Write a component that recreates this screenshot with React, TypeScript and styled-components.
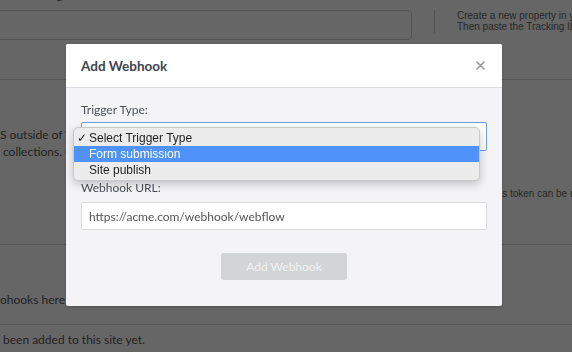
import styled, { createGlobalStyle } from 'styled-components'

const GlobalStyle = createGlobalStyle`
  html, body {
    margin: 0;
    padding: 0;
    width: 572px;
    height: 352px;
    overflow: hidden;
    background: #ffffff;
    font-family: Lato, 'Open Sans', sans-serif;
  }
`

const triggerOptions = ['Select Trigger Type', 'Form submission', 'Site publish']

function App() {
  return (
    <>
      <GlobalStyle />
      <Page>
        <Section $height={90}>
          <MainColumn>
            <FieldLabel>ate Tracking ID:</FieldLabel>
            <GhostInput />
          </MainColumn>
          <SideColumn $rule>
            <HelpText>Create a new property in your Google Analytics account.</HelpText>
            <HelpText>Then paste the Tracking ID here.</HelpText>
          </SideColumn>
        </Section>

        <Section $height={165}>
          <MainColumn $padTop={46}>
            <BodyLine>S outside of Webflow. Sync your items and manage</BodyLine>
            <BodyLine $indent={3}>collections. Create and update items with the API.</BodyLine>
          </MainColumn>
          <SideColumn $padTop={108}>
            <HelpText>The access token can be revoked.</HelpText>
          </SideColumn>
        </Section>

        <Section $height={80}>
          <MainColumn $padTop={46}>
            <BodyLine>ohooks here or with the API.</BodyLine>
          </MainColumn>
        </Section>

        <Section $height={40} $last>
          <MainColumn $padTop={6}>
            <BodyLine $indent={3}>been added to this site yet.</BodyLine>
          </MainColumn>
        </Section>
      </Page>

      <Overlay />

      <Modal>
        <ModalHeader>
          <ModalTitle>Add Webhook</ModalTitle>
          <CloseButton aria-label="close">
            <svg width="9" height="9" viewBox="0 0 9 9">
              <path d="M1 1 L8 8 M8 1 L1 8" stroke="#9a9a9a" strokeWidth="1.6" strokeLinecap="round" />
            </svg>
          </CloseButton>
        </ModalHeader>
        <ModalBody>
          <Label>Trigger Type:</Label>
          <SelectWrap>
            <SelectBox />
            <Dropdown>
              {triggerOptions.map((opt, i) => (
                <Option key={opt} $active={i === 1}>
                  <Check>{i === 0 ? '✓' : ''}</Check>
                  {opt}
                </Option>
              ))}
            </Dropdown>
          </SelectWrap>
          <Label $gap={30}>Webhook URL:</Label>
          <TextInput defaultValue="https://acme.com/webhook/webflow" />
          <ButtonRow>
            <SubmitButton disabled>Add Webhook</SubmitButton>
          </ButtonRow>
        </ModalBody>
      </Modal>
    </>
  )
}

const Page = styled.div`
  margin-top: -10px;
  width: 572px;
  color: #555;
`

const Section = styled.div<{ $height: number; $last?: boolean }>`
  display: flex;
  height: ${(p) => p.$height}px;
  box-sizing: border-box;
  border-bottom: ${(p) => (p.$last ? 'none' : '1px solid #d8d8d8')};
`

const MainColumn = styled.div<{ $padTop?: number }>`
  width: 412px;
  flex: none;
  padding-top: ${(p) => p.$padTop ?? 0}px;
  box-sizing: border-box;
`

const SideColumn = styled.div<{ $rule?: boolean; $padTop?: number }>`
  margin-left: 22px;
  padding-left: 22px;
  height: ${(p) => (p.$rule ? '23px' : 'auto')};
  border-left: ${(p) => (p.$rule ? '1px solid #c8c8c8' : 'none')};
  margin-top: ${(p) => (p.$rule ? '20px' : '0')};
  padding-top: ${(p) => (p.$rule ? 0 : p.$padTop ?? 0)}px;
  white-space: nowrap;
`

const FieldLabel = styled.div`
  font-size: 12px;
  line-height: 14px;
  height: 14px;
  margin-top: -2px;
  margin-bottom: 8px;
`

const GhostInput = styled.div`
  margin-left: -20px;
  width: 432px;
  height: 30px;
  box-sizing: border-box;
  border: 1px solid #cfcfcf;
  border-radius: 4px;
`

const HelpText = styled.div`
  font-family: 'Liberation Sans', Arial, sans-serif;
  font-size: 10px;
  line-height: 11px;
  color: #666;
`

const BodyLine = styled.div<{ $indent?: number }>`
  font-size: 12px;
  line-height: 17px;
  white-space: nowrap;
  margin-left: ${(p) => p.$indent ?? 0}px;
`

const Overlay = styled.div`
  position: fixed;
  inset: 0;
  background: rgba(0, 0, 0, 0.6);
`

const Modal = styled.div`
  position: absolute;
  left: 66px;
  top: 44px;
  width: 436px;
  height: 262px;
  border-radius: 2px;
  background: #f4f4f6;
  font-family: Lato, 'Open Sans', sans-serif;
  box-shadow: 0 1px 3px rgba(0, 0, 0, 0.2);
`

const ModalHeader = styled.div`
  height: 44px;
  box-sizing: border-box;
  display: flex;
  align-items: center;
  justify-content: space-between;
  padding: 0 14px 0 15px;
  background: #ffffff;
  border-bottom: 1px solid #dcdde3;
  border-radius: 2px 2px 0 0;
`

const ModalTitle = styled.div`
  font-size: 13.5px;
  font-weight: 700;
  color: #3e4350;
`

const CloseButton = styled.div`
  width: 16px;
  height: 16px;
  display: flex;
  align-items: center;
  justify-content: center;
  cursor: pointer;
`

const ModalBody = styled.div`
  padding: 15px 15px 0 15px;
  display: flex;
  flex-direction: column;
`

const Label = styled.div<{ $gap?: number }>`
  font-size: 12px;
  line-height: 14px;
  color: #4b505a;
  margin-top: ${(p) => p.$gap ?? 0}px;
  margin-bottom: ${(p) => (p.$gap ? 7 : 5)}px;
`

const SelectWrap = styled.div`
  position: relative;
`

const SelectBox = styled.div`
  height: 29px;
  box-sizing: border-box;
  background: #ffffff;
  border: 1px solid #6f9fe0;
  border-radius: 2px;
`

const Dropdown = styled.div`
  position: absolute;
  left: -8px;
  top: 5px;
  width: 407px;
  box-sizing: border-box;
  padding: 2px 0;
  background: #ececec;
  border: 1px solid #c9c9c9;
  border-radius: 5px;
  box-shadow: 0 3px 8px rgba(0, 0, 0, 0.22);
  font-family: 'Liberation Sans', Arial, sans-serif;
  font-size: 12px;
`

const Option = styled.div<{ $active?: boolean }>`
  display: flex;
  align-items: center;
  height: 16px;
  line-height: 16px;
  color: ${(p) => (p.$active ? '#ffffff' : '#1e1e1e')};
  background: ${(p) => (p.$active ? '#4f93fa' : 'transparent')};
`

const Check = styled.span`
  width: 15px;
  padding-left: 3px;
  box-sizing: border-box;
  font-size: 12px;
`

const TextInput = styled.input`
  height: 28px;
  box-sizing: border-box;
  border: 1px solid #dcdcdc;
  border-radius: 2px;
  background: #ffffff;
  padding: 0 7px;
  font-family: Lato, 'Open Sans', sans-serif;
  font-size: 12px;
  color: #555;
  outline: none;
`

const ButtonRow = styled.div`
  display: flex;
  justify-content: center;
  margin-top: 23px;
`

const SubmitButton = styled.button`
  width: 126px;
  height: 27px;
  border: none;
  border-radius: 3px;
  background: #d3d4d6;
  color: #f2f2f2;
  font-family: Lato, 'Open Sans', sans-serif;
  font-size: 12px;
`

export default App
